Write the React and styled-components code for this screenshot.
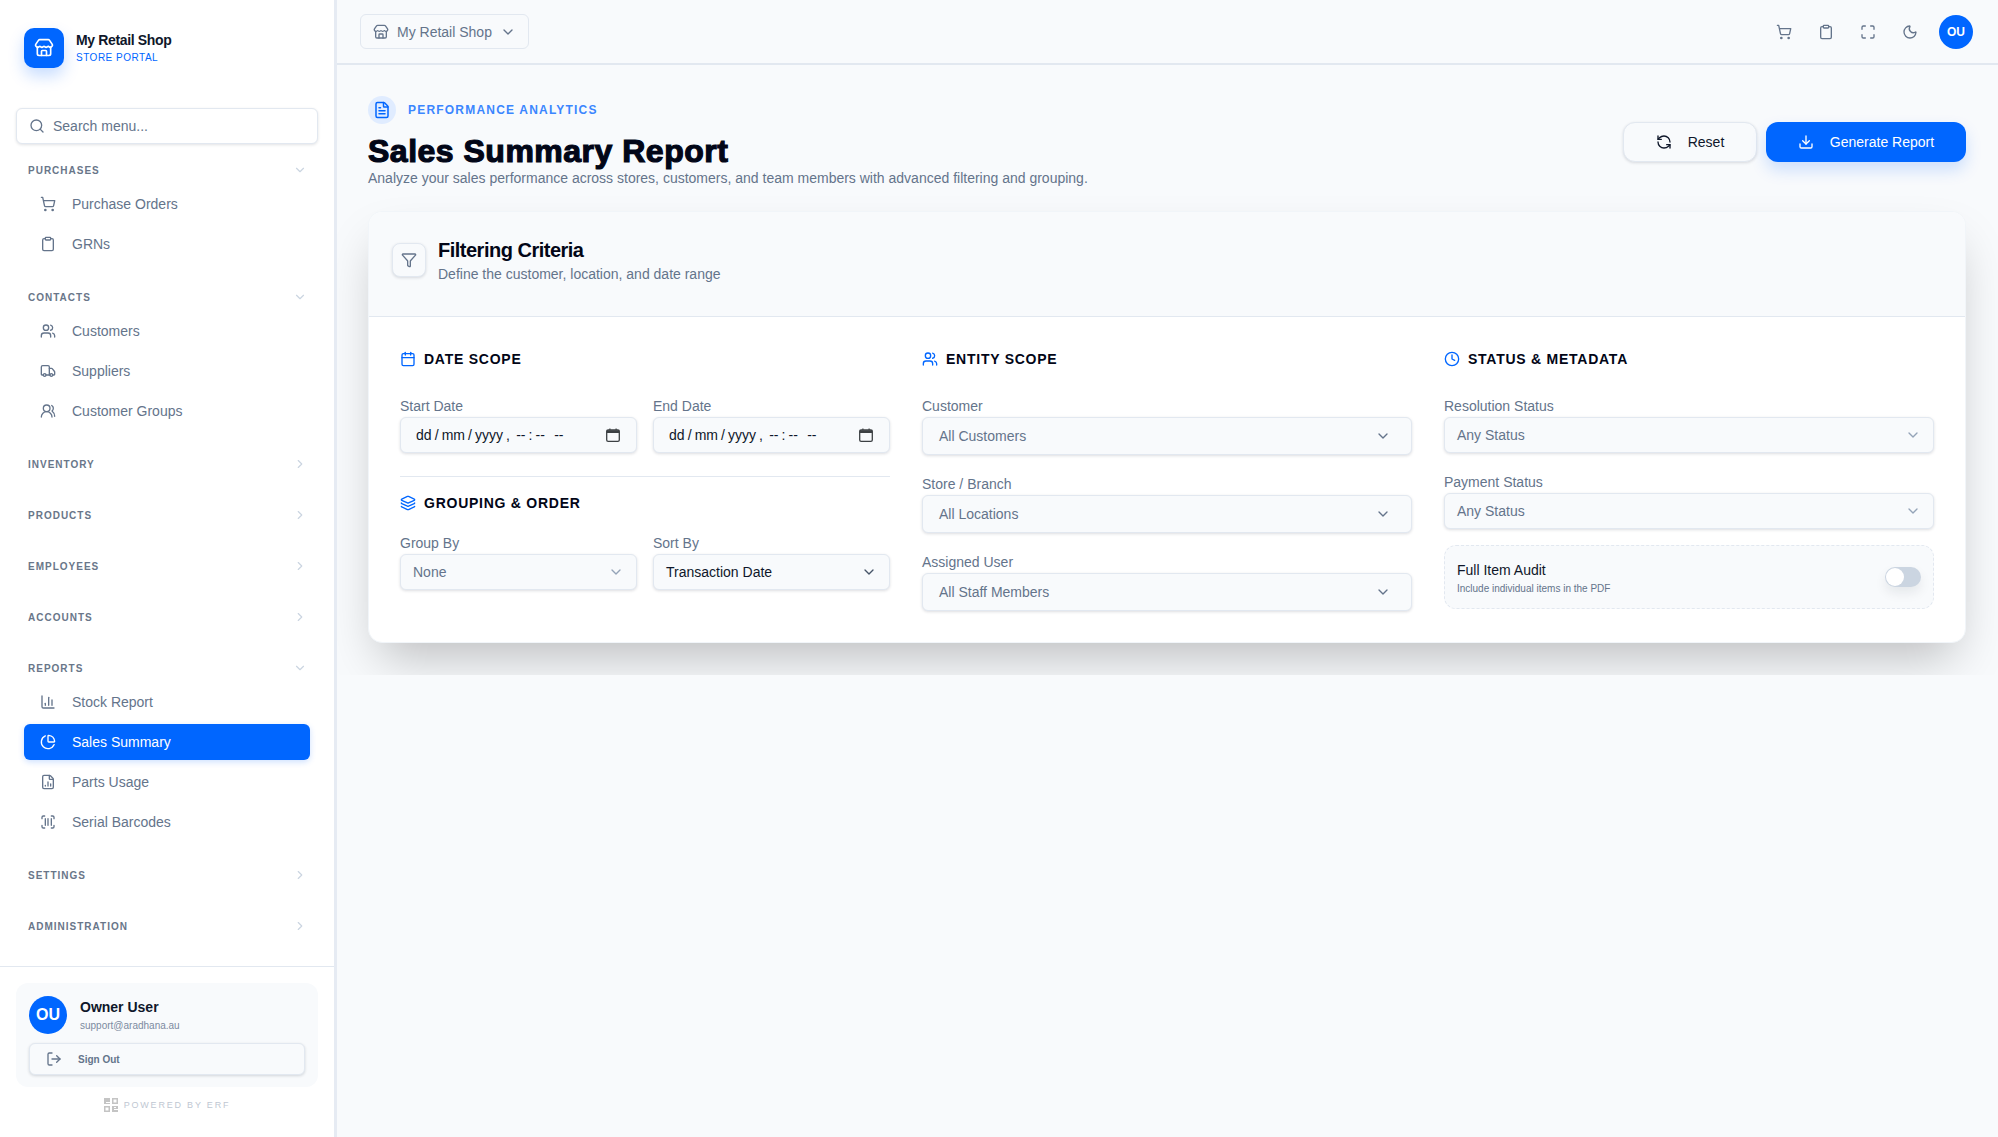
import React from 'react';
import styled, { createGlobalStyle } from 'styled-components';
import {
  Store, Search, ChevronDown, ChevronRight, ShoppingCart, Clipboard, Users, Truck, UsersRound,
  ChartColumn, ChartPie, FileChartColumn, ScanBarcode, LogOut, Maximize, Moon, RefreshCcw,
  Download, FileText, Funnel, Calendar, Layers, Clock,
} from 'lucide-react';

const Global = createGlobalStyle`
  * { box-sizing: border-box; }
  html, body { margin: 0; height: 100%; }
  body {
    font-family: "Liberation Sans", Arial, sans-serif;
    font-size: 14px;
    color: #0f172a;
    background: #f8fafc;
  }
`;

const Shell = styled.div`
  display: flex;
  height: 1137px;
  overflow: hidden;
`;

const Sidebar = styled.aside`
  width: 337px;
  flex-shrink: 0;
  display: flex;
  flex-direction: column;
  background: #fff;
  border-right: 3px solid #e6ebf3;
`;

const Brand = styled.div`
  display: flex;
  align-items: center;
  gap: 12px;
  padding: 28px 24px 0;
`;

const BrandIcon = styled.div`
  width: 40px;
  height: 40px;
  border-radius: 10px;
  background: #0066ff;
  color: #fff;
  display: flex;
  align-items: center;
  justify-content: center;
  box-shadow: 0 8px 16px rgba(0, 102, 255, 0.22);
`;

const BrandName = styled.div`
  font-size: 14px;
  line-height: 18px;
  font-weight: 700;
  letter-spacing: -0.35px;
  color: #0f172a;
`;

const BrandSub = styled.div`
  font-size: 10px;
  line-height: 14px;
  color: #0066ff;
  letter-spacing: 0.5px;
  margin-top: 2px;
`;

const SearchBox = styled.div`
  display: flex;
  align-items: center;
  gap: 8px;
  height: 36px;
  margin: 40px 16px 0;
  padding: 0 12px;
  background: #fff;
  border: 1px solid #e2e8f0;
  border-radius: 6px;
  box-shadow: 0 1px 3px rgba(15, 23, 42, 0.12);
  color: #64748b;
  svg { flex-shrink: 0; }
`;

const Nav = styled.nav`
  flex: 1;
  padding: 14px 24px 0;
  min-height: 0;
`;

const Group = styled.div`
  margin-bottom: ${(p) => (p.$open ? '23px' : '27px')};
`;

const GroupHead = styled.div`
  display: flex;
  align-items: center;
  justify-content: space-between;
  height: 24px;
  padding: 0 3px 0 4px;
  font-size: 10px;
  font-weight: 700;
  letter-spacing: 1px;
  color: #697689;
  svg { color: #cbd5e1; }
`;

const NavItem = styled.div`
  display: flex;
  align-items: center;
  gap: 16px;
  height: 36px;
  margin-top: 4px;
  padding: 0 16px;
  border-radius: 6px;
  font-size: 14px;
  color: ${(p) => (p.$active ? '#fff' : '#64748b')};
  background: ${(p) => (p.$active ? '#0066ff' : 'transparent')};
  box-shadow: ${(p) => (p.$active ? '0 2px 6px rgba(0, 102, 255, 0.2)' : 'none')};
`;

const SideFoot = styled.div`
  border-top: 1px solid #e2e8f0;
  padding: 16px 16px 0;
  height: 171px;
`;

const UserCard = styled.div`
  height: 104px;
  padding: 13px;
  border-radius: 12px;
  background: #f8fafc;
`;

const UserRow = styled.div`
  display: flex;
  align-items: center;
  gap: 13px;
`;

const Avatar = styled.div`
  width: ${(p) => p.$size}px;
  height: ${(p) => p.$size}px;
  border-radius: 50%;
  background: #0066ff;
  color: #fff;
  display: flex;
  align-items: center;
  justify-content: center;
  font-weight: 700;
  font-size: ${(p) => p.$font}px;
  flex-shrink: 0;
`;

const TopAvatar = styled(Avatar)`
  margin-left: -5px;
`;

const UserName = styled.div`
  font-size: 14px;
  line-height: 20px;
  font-weight: 700;
  color: #0f172a;
`;

const UserMail = styled.div`
  font-size: 10px;
  line-height: 14px;
  margin-top: 2px;
  color: #7c8aa0;
`;

const SignOut = styled.div`
  display: flex;
  align-items: center;
  gap: 16px;
  height: 32px;
  margin-top: 9px;
  padding: 0 16px;
  border: 1px solid #e2e8f0;
  border-radius: 6px;
  background: #f8fafc;
  box-shadow: 0 1px 3px rgba(15, 23, 42, 0.16);
  font-size: 10px;
  font-weight: 700;
  color: #64748b;
`;

const Powered = styled.div`
  display: flex;
  align-items: center;
  justify-content: center;
  gap: 6px;
  margin-top: 11px;
  font-size: 9px;
  letter-spacing: 1.8px;
  color: #c0c7d2;
`;

const Main = styled.main`
  flex: 1;
  min-width: 0;
  display: flex;
  flex-direction: column;
  background: #f8fafc;
`;

const TopBar = styled.header`
  display: flex;
  align-items: center;
  justify-content: space-between;
  height: 65px;
  padding: 0 25px 0 23px;
  border-bottom: 2px solid #e2e8f0;
  flex-shrink: 0;
`;

const ShopPicker = styled.div`
  display: flex;
  align-items: center;
  height: 35px;
  width: 169px;
  padding: 0 12px;
  gap: 8px;
  border: 1px solid #e2e8f0;
  border-radius: 6px;
  color: #64748b;
  white-space: nowrap;
  svg { flex-shrink: 0; }
`;

const TopIcons = styled.div`
  display: flex;
  align-items: center;
  gap: 26px;
  color: #64748b;
`;

const Page = styled.div`
  padding: 31px 32px 32px 31px;
  overflow: hidden;
  flex-shrink: 0;
`;

const PageHead = styled.div`
  display: flex;
  align-items: flex-end;
  justify-content: space-between;
`;

const Eyebrow = styled.div`
  display: flex;
  align-items: center;
  gap: 12px;
  font-size: 12px;
  font-weight: 700;
  letter-spacing: 1.2px;
  color: #3b86ff;
`;

const EyebrowIcon = styled.div`
  width: 28px;
  height: 28px;
  border-radius: 50%;
  background: #e0ecff;
  color: #0066ff;
  display: flex;
  align-items: center;
  justify-content: center;
`;

const Title = styled.h1`
  margin: 9px 0 0;
  font-size: 32px;
  line-height: 37px;
  font-weight: 700;
  letter-spacing: 0.5px;
  color: #020617;
  -webkit-text-stroke: 1.2px #020617;
`;

const Subtitle = styled.p`
  margin: -2px 0 0;
  font-size: 14px;
  line-height: 20px;
  color: #64748b;
`;

const Actions = styled.div`
  display: flex;
  gap: 9px;
  margin-bottom: 26px;
`;

const ResetButton = styled.div`
  display: flex;
  align-items: center;
  justify-content: center;
  gap: 16px;
  width: 134px;
  height: 40px;
  border: 1px solid #e2e8f0;
  border-radius: 12px;
  background: #f8fafc;
  box-shadow: 0 1px 3px rgba(15, 23, 42, 0.14);
  color: #0f172a;
`;

const GenerateButton = styled.div`
  display: flex;
  align-items: center;
  justify-content: center;
  gap: 16px;
  width: 200px;
  height: 40px;
  border-radius: 12px;
  background: #0066ff;
  box-shadow: 0 8px 16px rgba(0, 102, 255, 0.18);
  color: #fff;
`;

const Card = styled.section`
  margin-top: 23px;
  border: 1px solid #f1f5f9;
  border-radius: 14px;
  background: #fff;
  box-shadow: 0 25px 50px -12px rgba(0, 0, 0, 0.25);
  overflow: hidden;
`;

const CardHead = styled.div`
  display: flex;
  align-items: center;
  gap: 12px;
  padding: 24px 23px 32px;
  background: #f8fafc;
  border-bottom: 1px solid #e2e8f0;
`;

const FilterBox = styled.div`
  width: 34px;
  height: 34px;
  border: 1px solid #e2e8f0;
  border-radius: 8px;
  background: #f8fafc;
  box-shadow: 0 1px 3px rgba(15, 23, 42, 0.14);
  color: #64748b;
  display: flex;
  align-items: center;
  justify-content: center;
`;

const CardTitle = styled.div`
  font-size: 20px;
  line-height: 28px;
  font-weight: 700;
  letter-spacing: -0.5px;
  color: #020617;
`;

const CardSub = styled.div`
  font-size: 14px;
  line-height: 20px;
  color: #64748b;
`;

const Columns = styled.div`
  display: grid;
  grid-template-columns: repeat(3, 1fr);
  gap: 32px;
  padding: 32px 31px 31px;
`;

const Heading = styled.div`
  display: flex;
  align-items: center;
  gap: 8px;
  height: 20px;
  margin-bottom: ${(p) => p.$gap || 27}px;
  font-size: 14px;
  font-weight: 700;
  letter-spacing: 0.75px;
  color: #020617;
  svg { color: #0066ff; }
`;

const Pair = styled.div`
  display: grid;
  grid-template-columns: 1fr 1fr;
  gap: 16px;
`;

const Divider = styled.hr`
  margin: 23px 0 16px;
  border: 0;
  border-top: 1px solid #e2e8f0;
`;

const Label = styled.div`
  font-size: 14px;
  line-height: 20px;
  color: #64748b;
`;

const Field = styled.div`
  margin-bottom: ${(p) => p.$gap || 0}px;
`;

const Control = styled.div`
  display: flex;
  align-items: center;
  justify-content: space-between;
  height: ${(p) => p.$h || 36}px;
  padding: 0 ${(p) => p.$pr || 12}px 0 ${(p) => p.$pl || 12}px;
  margin-top: 1px;
  border: 1px solid #e2e8f0;
  border-radius: 6px;
  background: #f8fafc;
  box-shadow: 0 1px 3px rgba(15, 23, 42, 0.14);
  color: ${(p) => (p.$dark ? '#0f172a' : '#64748b')};
  svg { color: ${(p) => (p.$dark ? '#475569' : p.$h === 38 ? '#64748b' : '#94a3b8')}; }
`;

const DateText = styled.span`
  white-space: pre;
  word-spacing: -0.8px;
  color: #0f172a;
`;

const AuditBox = styled.div`
  display: flex;
  align-items: center;
  justify-content: space-between;
  height: 64px;
  margin-top: 16px;
  padding: 0 12px;
  border: 1px dashed #e2e8f0;
  border-radius: 12px;
  background: #f8fafc;
`;

const AuditText = styled.div`
  margin-top: 3px;
`;

const AuditTitle = styled.div`
  font-size: 14px;
  line-height: 18px;
  color: #0f172a;
`;

const AuditSub = styled.div`
  font-size: 10px;
  line-height: 14px;
  margin-top: 3px;
  color: #64748b;
`;

const Toggle = styled.div`
  width: 36px;
  height: 20px;
  padding: 1px;
  border-radius: 10px;
  background: #cbd5e1;
  box-shadow: 0 6px 12px rgba(15, 23, 42, 0.08);
  &::after {
    content: '';
    display: block;
    width: 18px;
    height: 18px;
    border-radius: 50%;
    background: #fff;
  }
`;

const navGroups = [
  { name: 'PURCHASES', items: [['Purchase Orders', ShoppingCart], ['GRNs', Clipboard]] },
  { name: 'CONTACTS', items: [['Customers', Users], ['Suppliers', Truck], ['Customer Groups', UsersRound]] },
  { name: 'INVENTORY' },
  { name: 'PRODUCTS' },
  { name: 'EMPLOYEES' },
  { name: 'ACCOUNTS' },
  {
    name: 'REPORTS',
    items: [['Stock Report', ChartColumn], ['Sales Summary', ChartPie], ['Parts Usage', FileChartColumn], ['Serial Barcodes', ScanBarcode]],
  },
  { name: 'SETTINGS' },
  { name: 'ADMINISTRATION' },
];

const QrMark = () => (
  <svg width="14" height="14" viewBox="0 0 14 14" fill="#c4c4c4" fillRule="evenodd">
    <path d="M0 0h6v4H2v1h4v1H0zM8 0h6v6H8zM9.5 1.5v3h3v-3zM0 8h6v6H0zM1.5 9.5v3h3v-3zM8 8h6v3h-4v1h4v2H8zM10 9v1h2V9z" />
  </svg>
);

// the browser's own date-picker glyph, lucide's calendar is too light for it
const NativeCalendar = () => (
  <svg width="16" height="16" viewBox="0 0 16 16" fill="none">
    <rect x="1.7" y="3" width="12.6" height="11.3" rx="1.4" stroke="#3c4043" strokeWidth="1.3" />
    <path d="M1.7 3.2h12.6v2.8H1.7zM4.3 1.4h1.2V3H4.3zM10.5 1.4h1.2V3h-1.2z" fill="#3c4043" />
  </svg>
);

function Select({ label, value, h, dark, gap }) {
  return (
    <Field $gap={gap}>
      <Label>{label}</Label>
      <Control $h={h} $dark={dark} $pl={h === 38 ? 16 : 12} $pr={h === 38 ? 20 : 12}>
        {value}
        <ChevronDown size={16} />
      </Control>
    </Field>
  );
}

function DateField({ label }) {
  return (
    <Field>
      <Label>{label}</Label>
      <Control $dark $pl={15} $pr={15}>
        <DateText>{'dd / mm / yyyy ,  -- : --   --'}</DateText>
        <NativeCalendar />
      </Control>
    </Field>
  );
}

export default function App() {
  return (
    <Shell>
      <Global />
      <Sidebar>
        <Brand>
          <BrandIcon><Store size={20} /></BrandIcon>
          <div>
            <BrandName>My Retail Shop</BrandName>
            <BrandSub>STORE PORTAL</BrandSub>
          </div>
        </Brand>
        <SearchBox>
          <Search size={16} />
          Search menu...
        </SearchBox>
        <Nav>
          {navGroups.map((g) => (
            <Group key={g.name} $open={!!g.items}>
              <GroupHead>
                {g.name}
                {g.items ? <ChevronDown size={14} /> : <ChevronRight size={14} />}
              </GroupHead>
              {g.items && g.items.map(([name, Icon]) => (
                <NavItem key={name} $active={name === 'Sales Summary'}>
                  <Icon size={16} />
                  {name}
                </NavItem>
              ))}
            </Group>
          ))}
        </Nav>
        <SideFoot>
          <UserCard>
            <UserRow>
              <Avatar $size={38} $font={16}>OU</Avatar>
              <div>
                <UserName>Owner User</UserName>
                <UserMail>support@aradhana.au</UserMail>
              </div>
            </UserRow>
            <SignOut><LogOut size={16} />Sign Out</SignOut>
          </UserCard>
          <Powered><QrMark />POWERED BY ERF</Powered>
        </SideFoot>
      </Sidebar>
      <Main>
        <TopBar>
          <ShopPicker>
            <Store size={16} />
            My Retail Shop
            <ChevronDown size={16} />
          </ShopPicker>
          <TopIcons>
            <ShoppingCart size={16} />
            <Clipboard size={16} />
            <Maximize size={16} />
            <Moon size={16} />
            <TopAvatar $size={34} $font={12}>OU</TopAvatar>
          </TopIcons>
        </TopBar>
        <Page>
          <PageHead>
            <div>
              <Eyebrow>
                <EyebrowIcon><FileText size={18} /></EyebrowIcon>
                PERFORMANCE ANALYTICS
              </Eyebrow>
              <Title>Sales Summary Report</Title>
              <Subtitle>Analyze your sales performance across stores, customers, and team members with advanced filtering and grouping.</Subtitle>
            </div>
            <Actions>
              <ResetButton><RefreshCcw size={16} />Reset</ResetButton>
              <GenerateButton><Download size={16} />Generate Report</GenerateButton>
            </Actions>
          </PageHead>
          <Card>
            <CardHead>
              <FilterBox><Funnel size={16} /></FilterBox>
              <div>
                <CardTitle>Filtering Criteria</CardTitle>
                <CardSub>Define the customer, location, and date range</CardSub>
              </div>
            </CardHead>
            <Columns>
              <div>
                <Heading><Calendar size={16} />DATE SCOPE</Heading>
                <Pair>
                  <DateField label="Start Date" />
                  <DateField label="End Date" />
                </Pair>
                <Divider />
                <Heading $gap={20}><Layers size={16} />GROUPING &amp; ORDER</Heading>
                <Pair>
                  <Select label="Group By" value="None" />
                  <Select label="Sort By" value="Transaction Date" dark />
                </Pair>
              </div>
              <div>
                <Heading><Users size={16} />ENTITY SCOPE</Heading>
                <Select label="Customer" value="All Customers" h={38} gap={19} />
                <Select label="Store / Branch" value="All Locations" h={38} gap={19} />
                <Select label="Assigned User" value="All Staff Members" h={38} />
              </div>
              <div>
                <Heading><Clock size={16} />STATUS &amp; METADATA</Heading>
                <Select label="Resolution Status" value="Any Status" gap={19} />
                <Select label="Payment Status" value="Any Status" />
                <AuditBox>
                  <AuditText>
                    <AuditTitle>Full Item Audit</AuditTitle>
                    <AuditSub>Include individual items in the PDF</AuditSub>
                  </AuditText>
                  <Toggle />
                </AuditBox>
              </div>
            </Columns>
          </Card>
        </Page>
      </Main>
    </Shell>
  );
}
